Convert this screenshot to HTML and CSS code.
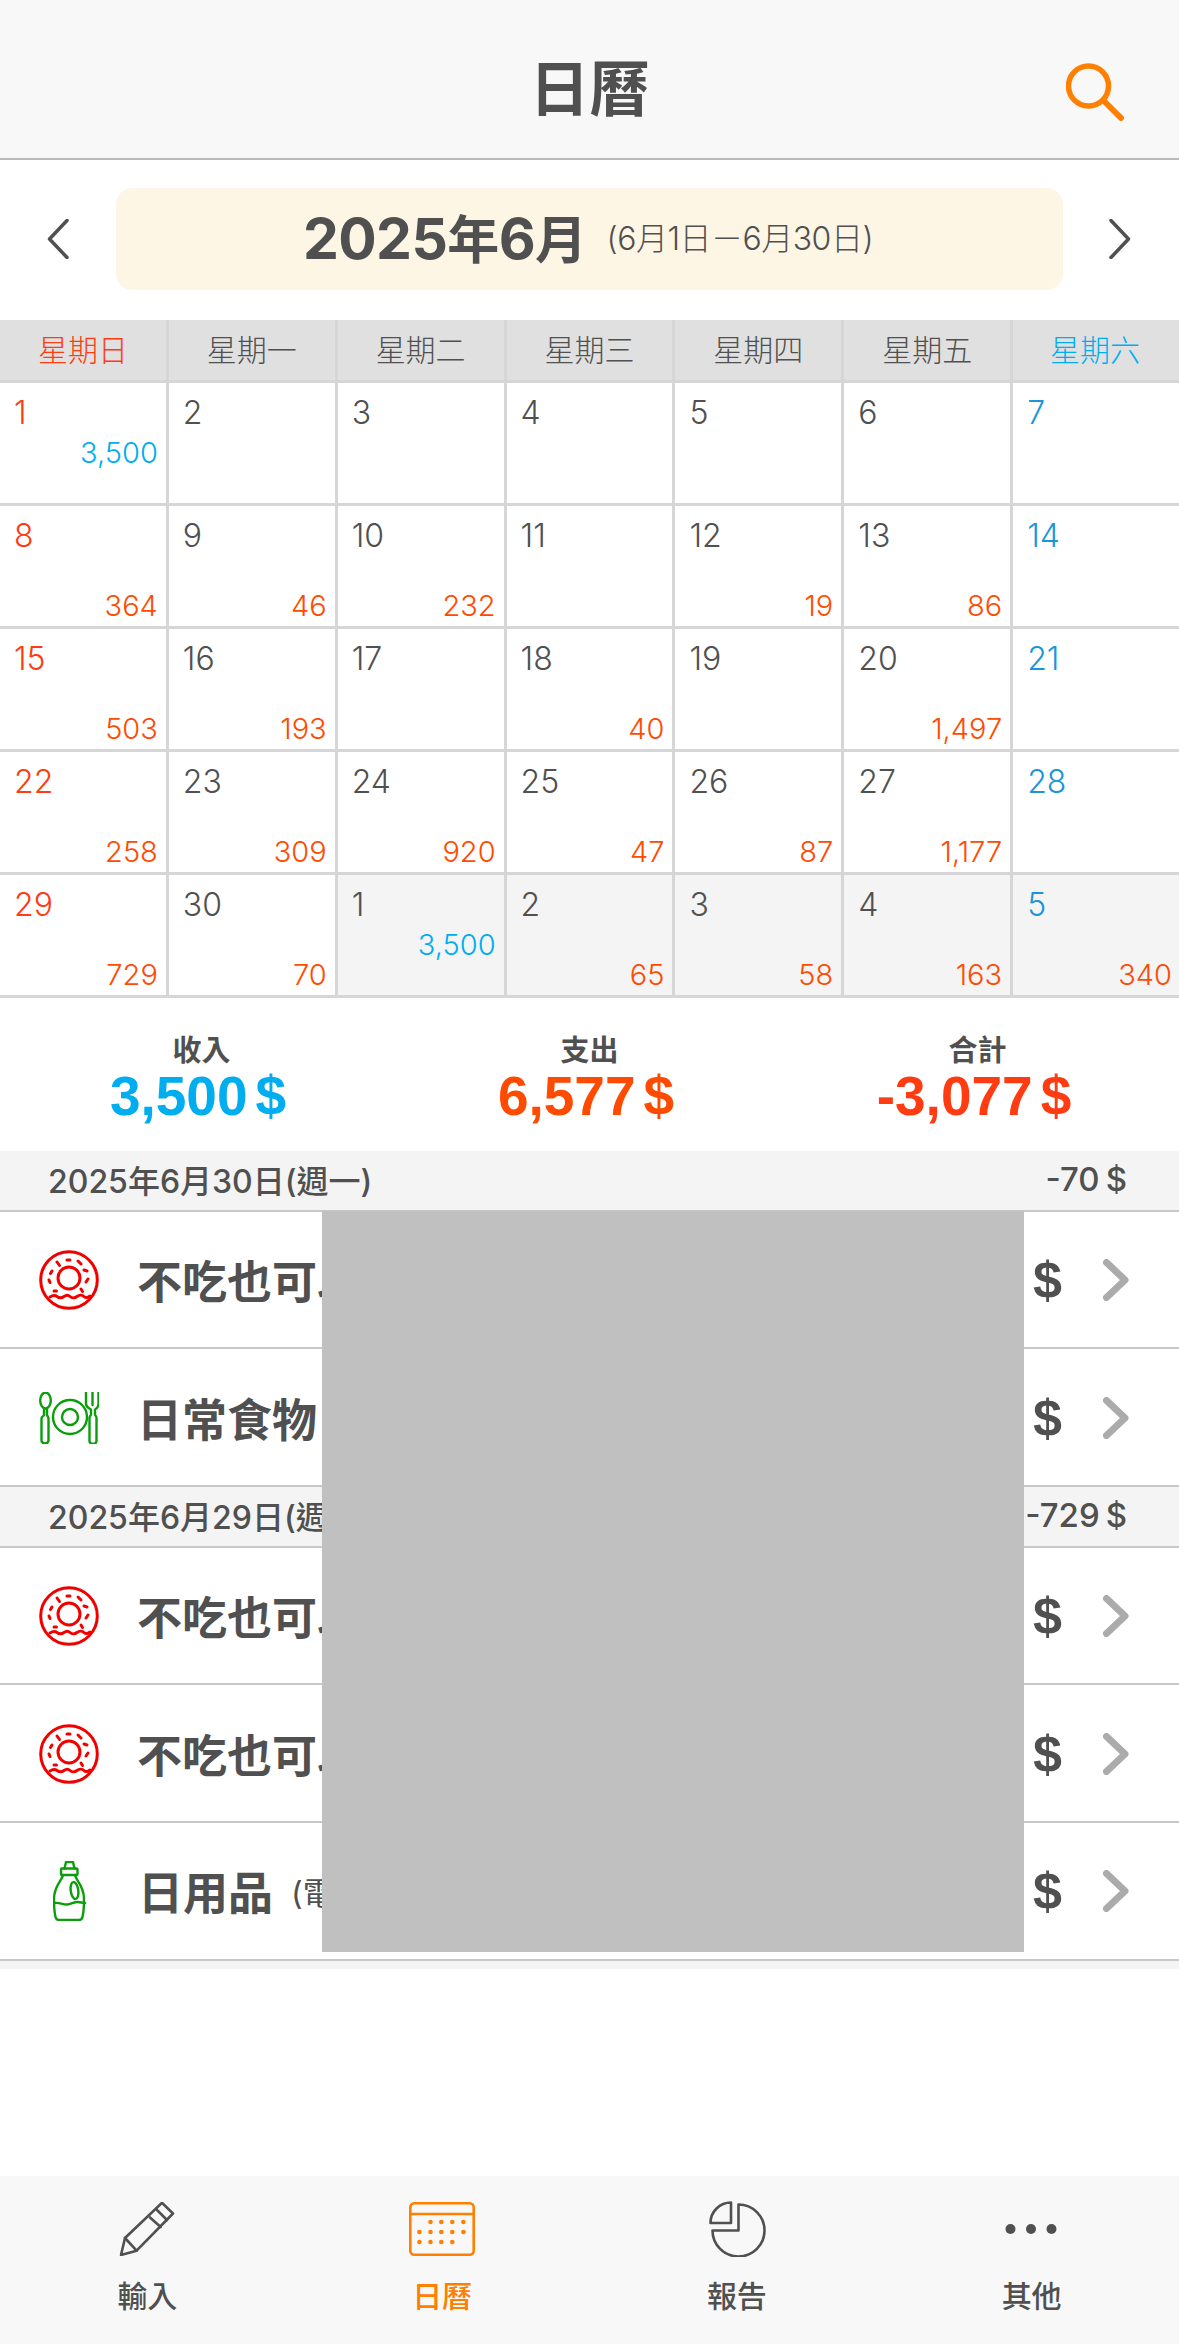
FILE: index.html
```html
<!DOCTYPE html>
<html lang="zh-Hant">
<head>
<meta charset="utf-8">
<title>日曆</title>
<link rel="stylesheet" href="styles.css">
</head>
<body>
<svg class="defs" width="0" height="0" aria-hidden="true">
  <symbol id="donut" viewBox="0 0 60 60">
    <g fill="none" stroke="#f20000" stroke-width="3" stroke-linecap="round">
      <circle cx="30" cy="30" r="28.3"/>
      <circle cx="30" cy="28" r="11"/>
      <path d="M11 47c3-2 5-2 7-.5s5 1.500 7 0 4-2 6 0 5 1.500 7 0 5-2 7 0 4 1 6-.5"/>
      <path d="M28 10h3M18 12l2.500 3.500M39 11l3 3M13 21l-1.500 2.500M45 20l3 1M10 30l1 2.500M49 29l-2 3M15 41h2.500M42 39l1.500 2.500"/>
    </g>
  </symbol>
  <symbol id="plate" viewBox="0 0 60 52">
    <g fill="none" stroke="#0a9e0a" stroke-width="2.400" stroke-linejoin="round" stroke-linecap="round">
      <ellipse cx="6.500" cy="8.500" rx="5.300" ry="8"/>
      <path d="M5 16.500V23c0 1-2.500 1.500-2.500 3.500v22a3.500 3 0 0 0 7 0v-22C9.500 24.500 8 24 8 23v-6.500"/>
      <circle cx="31" cy="25" r="17"/>
      <circle cx="31" cy="25" r="8"/>
      <path d="M47 .5v11c0 3 3 5 5 6v5c0 1-1.500 1.500-1.500 3.500v23a3.500 3 0 0 0 7 0V26c0-2-1.500-2.500-1.500-3.500v-5c2-1 3.500-3 3.500-6V.5M53.500.5V13"/>
    </g>
  </symbol>
  <symbol id="bottle" viewBox="0 0 33 60">
    <g fill="none" stroke="#0a9e0a" stroke-width="2.400" stroke-linejoin="round" stroke-linecap="round">
      <path d="M11.500 7.500 13 1h7l1.500 6.500"/>
      <rect x="8" y="7.500" width="16.500" height="6.500" rx="1"/>
      <path d="M10 14c-1 6-9 10-9 24 0 7 .5 14 1.500 18 .5 2 1.500 3 3.500 3h20c2 0 3-1 3.500-3 1-4 1.500-11 1.500-18 0-14-8-18-9-24"/>
      <path d="M1.500 42c5-1 8 2 13 1.500s7-3 10.500-2.500 5 1 7 1"/>
      <ellipse cx="21.500" cy="29.500" rx="3.800" ry="8.500" transform="rotate(-8 21.500 29.500)"/>
    </g>
  </symbol>
  <symbol id="chev" viewBox="0 0 26 42">
    <path d="M3.500 3.500 22 21 3.500 38.500" fill="none" stroke="#ababab" stroke-width="7" stroke-linecap="round" stroke-linejoin="round"/>
  </symbol>
</svg>

<div class="app">
  <header class="topbar">
    <h1 class="title">日曆</h1>
    <svg class="search" viewBox="0 0 58 58"><circle cx="22.500" cy="23" r="20" fill="none" stroke="#ff8000" stroke-width="5.500"/><path d="M38 38 55 55" stroke="#ff8000" stroke-width="6" stroke-linecap="round"/></svg>
  </header>

  <section class="monthbar">
    <svg class="nav" viewBox="0 0 22 40"><path d="M20 1.500 2.500 20 20 38.500" fill="none" stroke="#505050" stroke-width="3.500" stroke-linecap="round" stroke-linejoin="round"/></svg>
    <div class="pill">
      <span class="month">2025<span class="month-cjk">年</span>6<span class="month-cjk">月</span></span>
      <span class="range">(6月1日－6月30日)</span>
    </div>
    <svg class="nav" viewBox="0 0 22 40"><path d="M2 1.500 19.500 20 2 38.500" fill="none" stroke="#505050" stroke-width="3.500" stroke-linecap="round" stroke-linejoin="round"/></svg>
  </section>

  <div class="weekdays">
    <div class="wd sun">星期日</div><div class="wd">星期一</div><div class="wd">星期二</div><div class="wd">星期三</div><div class="wd">星期四</div><div class="wd">星期五</div><div class="wd sat">星期六</div>
  </div>

  <div class="cal">
    <div class="day sun"><span class="n">1</span><span class="inc">3,500</span></div>
    <div class="day"><span class="n">2</span></div>
    <div class="day"><span class="n">3</span></div>
    <div class="day"><span class="n">4</span></div>
    <div class="day"><span class="n">5</span></div>
    <div class="day"><span class="n">6</span></div>
    <div class="day sat"><span class="n">7</span></div>

    <div class="day sun"><span class="n">8</span><span class="exp">364</span></div>
    <div class="day"><span class="n">9</span><span class="exp">46</span></div>
    <div class="day"><span class="n">10</span><span class="exp">232</span></div>
    <div class="day"><span class="n">11</span></div>
    <div class="day"><span class="n">12</span><span class="exp">19</span></div>
    <div class="day"><span class="n">13</span><span class="exp">86</span></div>
    <div class="day sat"><span class="n">14</span></div>

    <div class="day sun"><span class="n">15</span><span class="exp">503</span></div>
    <div class="day"><span class="n">16</span><span class="exp">193</span></div>
    <div class="day"><span class="n">17</span></div>
    <div class="day"><span class="n">18</span><span class="exp">40</span></div>
    <div class="day"><span class="n">19</span></div>
    <div class="day"><span class="n">20</span><span class="exp">1,497</span></div>
    <div class="day sat"><span class="n">21</span></div>

    <div class="day sun"><span class="n">22</span><span class="exp">258</span></div>
    <div class="day"><span class="n">23</span><span class="exp">309</span></div>
    <div class="day"><span class="n">24</span><span class="exp">920</span></div>
    <div class="day"><span class="n">25</span><span class="exp">47</span></div>
    <div class="day"><span class="n">26</span><span class="exp">87</span></div>
    <div class="day"><span class="n">27</span><span class="exp">1,177</span></div>
    <div class="day sat"><span class="n">28</span></div>

    <div class="day sun"><span class="n">29</span><span class="exp">729</span></div>
    <div class="day"><span class="n">30</span><span class="exp">70</span></div>
    <div class="day other"><span class="n">1</span><span class="inc">3,500</span></div>
    <div class="day other"><span class="n">2</span><span class="exp">65</span></div>
    <div class="day other"><span class="n">3</span><span class="exp">58</span></div>
    <div class="day other"><span class="n">4</span><span class="exp">163</span></div>
    <div class="day other sat"><span class="n">5</span><span class="exp">340</span></div>
  </div>

  <section class="summary">
    <div class="sum"><div class="sum-label">收入</div><div class="sum-val blue">3,500<span class="cur">$</span></div></div>
    <div class="sum"><div class="sum-label">支出</div><div class="sum-val red">6,577<span class="cur">$</span></div></div>
    <div class="sum"><div class="sum-label">合計</div><div class="sum-val red2">-3,077<span class="cur">$</span></div></div>
  </section>

  <main class="list">
    <div class="date-row"><span>2025年6月30日(週一)</span><span class="date-total">-70<span class="cur-s">$</span></span></div>
    <div class="row"><svg class="ico"><use href="#donut"/></svg><span class="name">不吃也可以</span><span class="dollar">$</span><svg class="chev"><use href="#chev"/></svg></div>
    <div class="row"><svg class="ico plate"><use href="#plate"/></svg><span class="name">日常食物</span><span class="dollar">$</span><svg class="chev"><use href="#chev"/></svg></div>
    <div class="date-row"><span>2025年6月29日(週日)</span><span class="date-total">-729<span class="cur-s">$</span></span></div>
    <div class="row"><svg class="ico"><use href="#donut"/></svg><span class="name">不吃也可以</span><span class="dollar">$</span><svg class="chev"><use href="#chev"/></svg></div>
    <div class="row"><svg class="ico"><use href="#donut"/></svg><span class="name">不吃也可以</span><span class="dollar">$</span><svg class="chev"><use href="#chev"/></svg></div>
    <div class="row"><svg class="ico bottle"><use href="#bottle"/></svg><span class="name">日用品</span><span class="note">(電</span><span class="dollar">$</span><svg class="chev"><use href="#chev"/></svg></div>
    <div class="list-foot"></div>
    <div class="redact"></div>
  </main>

  <nav class="tabs">
    <div class="tab">
      <svg class="tab-ico" viewBox="0 0 54 54"><g fill="none" stroke="#505050" stroke-width="2.600" stroke-linejoin="round" stroke-linecap="round"><path d="M42 .8 53 11.500 16.600 48.700 1 53 5 36Z"/><path d="M5 36 16.600 48.700M30 15.500 40.700 25M37 8 47 18"/></g></svg>
      <span class="tab-label">輸入</span>
    </div>
    <div class="tab active">
      <svg class="tab-ico" viewBox="0 0 66 54"><g fill="none" stroke="#ff8000" stroke-width="2.600"><rect x="1.300" y="1.300" width="63.400" height="51.400" rx="4"/><path d="M1.300 12h63.400"/></g><g fill="#ff8000"><circle cx="21.500" cy="20" r="2.300"/><circle cx="32.300" cy="20" r="2.300"/><circle cx="43.300" cy="20" r="2.300"/><circle cx="54.400" cy="20" r="2.300"/><circle cx="10.400" cy="30" r="2.300"/><circle cx="21.500" cy="30" r="2.300"/><circle cx="32.300" cy="30" r="2.300"/><circle cx="43.300" cy="30" r="2.300"/><circle cx="54.400" cy="30" r="2.300"/><circle cx="10.400" cy="40" r="2.300"/><circle cx="21.500" cy="40" r="2.300"/><circle cx="32.300" cy="40" r="2.300"/><circle cx="43.300" cy="40" r="2.300"/></g></svg>
      <span class="tab-label">日曆</span>
    </div>
    <div class="tab">
      <svg class="tab-ico pie" viewBox="0 0 56 56"><g fill="none" stroke="#505050" stroke-width="2.600" stroke-linejoin="round"><path d="M29.500 3.500A26 26 0 1 1 3.500 29.500H29.500Z"/><path d="M22 1.500V22H1.500A20.500 20.500 0 0 1 22 1.500Z"/></g></svg>
      <span class="tab-label">報告</span>
    </div>
    <div class="tab">
      <svg class="tab-ico" viewBox="0 0 54 54"><g fill="#505050"><circle cx="5.500" cy="27" r="5"/><circle cx="26" cy="27" r="5"/><circle cx="46.500" cy="27" r="5"/></g></svg>
      <span class="tab-label">其他</span>
    </div>
  </nav>
</div>
</body>
</html>
```

FILE: styles.css
```css
* { box-sizing: border-box; }
html, body { margin: 0; padding: 0; background: #fff; }
body {
  font-family: "Inter", "Liberation Sans", "Noto Sans CJK TC", sans-serif;
  color: #505050;
}
.defs { position: absolute; }
.app { width: 1179px; height: 2344px; display: flex; flex-direction: column; overflow: hidden; }

.topbar {
  height: 160px; flex: none; background: #f8f8f8; border-bottom: 2px solid #b9b9b9; padding-top: 20px;
  display: flex; align-items: center; justify-content: center; position: relative;
}
.title { margin: 0; font-size: 60px; font-weight: 700; line-height: 1; }
.search { position: absolute; left: 1066px; top: 63px; width: 58px; height: 58px; }

.monthbar {
  height: 160px; flex: none; display: flex; align-items: flex-start; justify-content: space-between;
  padding: 28px 48px 0 48px;
}
.nav { width: 22px; height: 40px; margin-top: 31px; flex: none; }
.nav:first-child { margin-left: -1px; }
.pill {
  width: 947px; height: 102px; background: #fef6e5; border-radius: 16px; padding: 0 2px 6px 0;
  display: flex; align-items: center; justify-content: center; gap: 20px;
}
.month { font-size: 57px; font-weight: 700; letter-spacing: -.6px; }
.month-cjk { font-size: 52px; }
.range { font-size: 32px; font-weight: 300; letter-spacing: -.5px; }

.weekdays {
  display: grid; grid-template-columns: repeat(7, 1fr); height: 63px; flex: none; width: 1182px;
  background: #e0e0e0; border-bottom: 3px solid #d6d6d6;
}
.wd {
  display: flex; align-items: center; justify-content: center; font-size: 30px; font-weight: 300; padding-bottom: 4px;
  border-right: 3px solid #d6d6d6;
}
.wd:last-child { border-right: 0; padding-right: 5px; }
.wd.sun { color: #ff3b12; }
.wd.sat { color: #00aeef; }

.cal { display: grid; grid-template-columns: repeat(7, 1fr); grid-auto-rows: 123px; flex: none; width: 1182px; }
.day {
  display: grid; grid-template-rows: 46px 32px 28px; border-right: 3px solid #d6d6d6; border-bottom: 3px solid #d6d6d6;
  padding: 7px 8px 0 14px; font-weight: 300; font-size: 31px; line-height: 1;
}
.day:nth-child(7n) { border-right: 0; padding-right: 10px; }
.n { grid-row: 1; align-self: center; font-size: 32px; }
.inc { grid-row: 2; justify-self: end; align-self: center; color: #00aeef; font-size: 29px; }
.exp { grid-row: 3; justify-self: end; align-self: center; color: #ff4b00; font-size: 29px; }
.day.sun .n { color: #ff3b12; }
.day.sat .n { color: #1a96d8; }
.day.other { background: #f4f4f4; }

.summary { height: 153px; flex: none; display: grid; grid-template-columns: repeat(3, 1fr); padding: 37px 7.5px 0; }
.sum { text-align: center; }
.sum-label { font-size: 29px; font-weight: 600; line-height: 32px; }
.sum-val { font-family: "Liberation Sans", sans-serif; font-size: 55px; font-weight: 700; line-height: 58px; padding-right: 7px; }
.cur { margin-left: 8px; }
.blue { color: #00aeef; }
.red { color: #ff4b00; }
.red2 { color: #ff3b12; }

.list { flex: 1; position: relative; }
.date-row {
  height: 60.5px; background: #f4f4f4; border-bottom: 2px solid #c8c8c8;
  display: flex; justify-content: space-between; align-items: center;
  padding: 0 52px 2px 48px; font-size: 32px; font-weight: 500;
}
.date-total { font-size: 33px; }
.cur-s { margin-left: 6px; }
.row {
  height: 137.75px; display: flex; align-items: center; border-bottom: 2px solid #c8c8c8;
  padding: 1px 50px 0 39px;
}
.ico { width: 60px; height: 60px; flex: none; }
.ico.plate { height: 52px; }
.ico.bottle { width: 33px; height: 60px; margin: 0 14px; }
.name { font-size: 45px; font-weight: 700; margin: 0 0 1px 38px; white-space: nowrap; }
.note { font-size: 32px; margin-left: 18px; font-weight: 400; }
.dollar { font-family: "Liberation Sans", sans-serif; margin-left: auto; font-size: 52px; font-weight: 700; line-height: 1; }
.chev { width: 26px; height: 42px; margin-left: 41px; flex: none; }
.list-foot { height: 8px; background: #f4f4f4; }
.redact { position: absolute; left: 322px; top: 60px; width: 702px; height: 741px; background: #c0c0c0; }

.tabs {
  height: 168px; flex: none; background: #f8f8f8;
  display: grid; grid-template-columns: repeat(4, 1fr); padding-top: 26px;
}
.tab { display: flex; flex-direction: column; align-items: center; }
.tab-ico { height: 54px; width: 70px; }
.tab-ico.pie { height: 56px; margin: -1px 0; }
.tab-label { margin-top: 22px; font-size: 30px; font-weight: 500; line-height: 36px; }
.tab.active .tab-label { color: #ff8000; }
```
